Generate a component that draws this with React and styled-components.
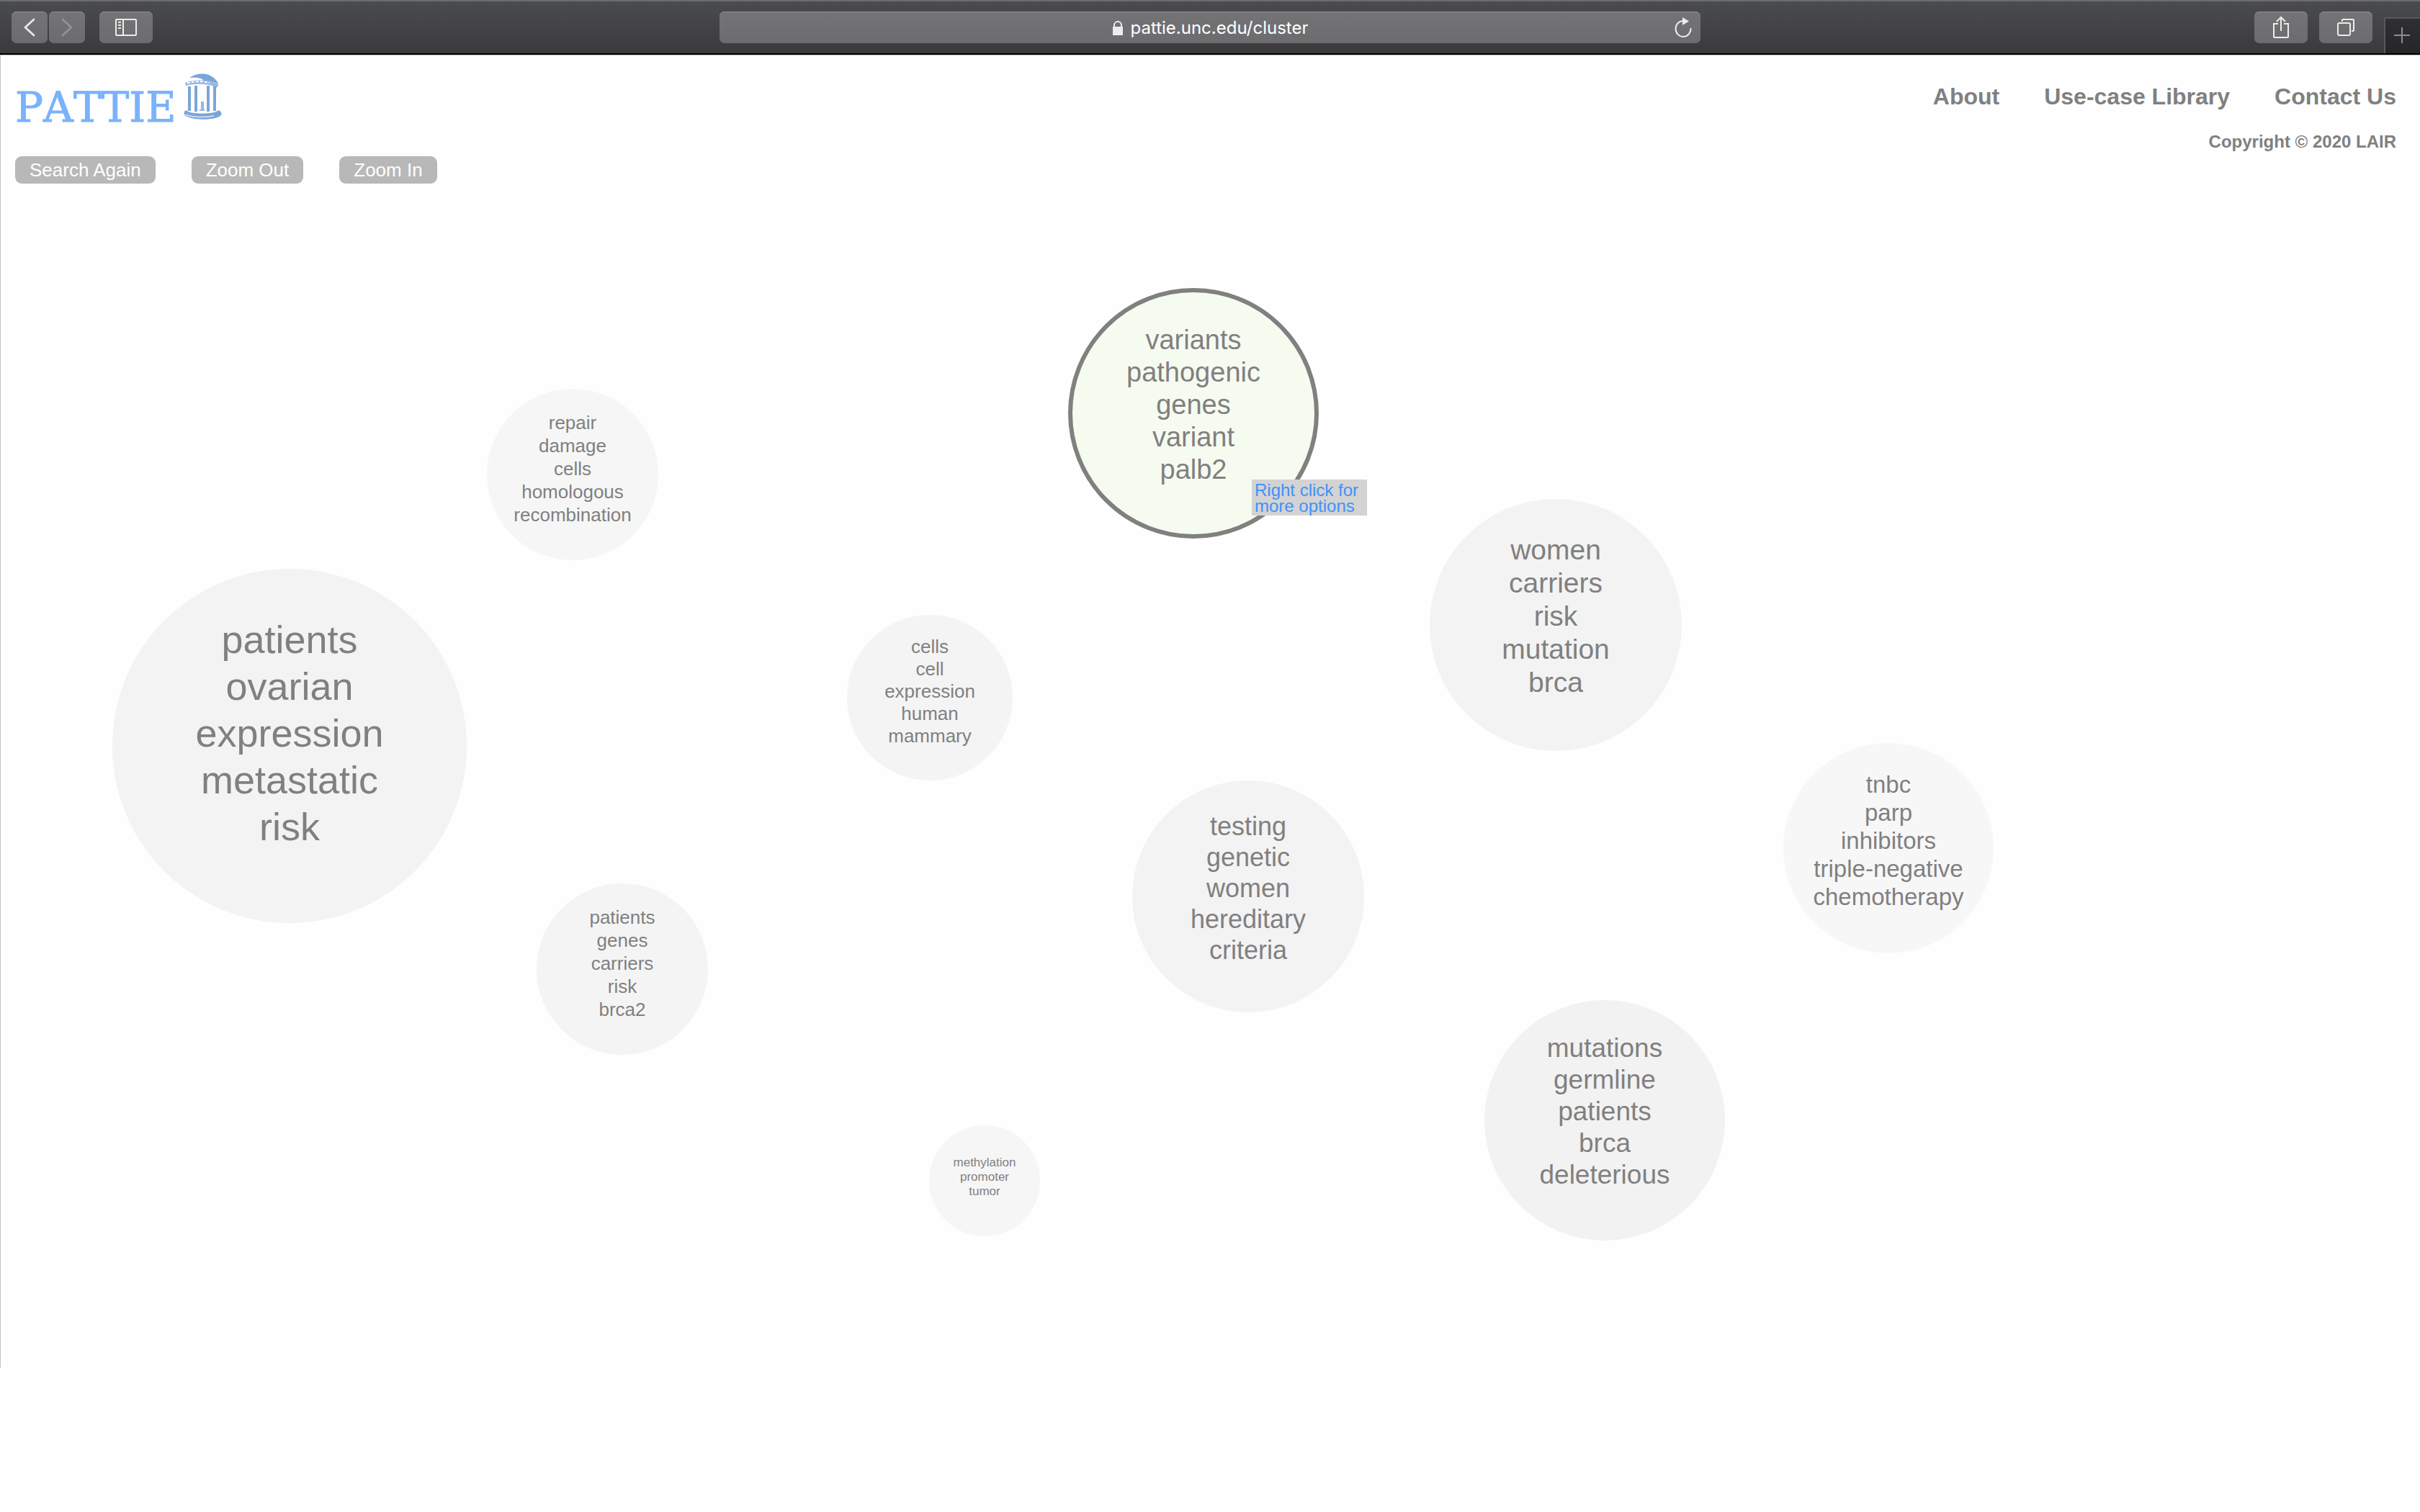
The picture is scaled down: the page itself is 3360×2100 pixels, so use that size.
import React from "react";
import styled, { createGlobalStyle } from "styled-components";

const sans = `"Liberation Sans", Arial, Helvetica, sans-serif`;

const GlobalStyle = createGlobalStyle`
  *, *::before, *::after { box-sizing: border-box; }
  body { margin: 0; background: #fefefe; color: #808080; font-family: ${sans}; }
  button, input { font: inherit; color: inherit; margin: 0; padding: 0; border: 0; background: none; }
  svg { display: block; flex: none; }
`;

/* ---------- browser bar ---------- */

const BrowserBar = styled.div`
  display: grid;
  grid-template-columns: 1fr minmax(0, 1362px) 1fr;
  height: 77px;
  padding-top: 16px;
  background: linear-gradient(#4b4c4e, #3a3a3c);
  border-bottom: 1px solid #c4c4c4;
  box-shadow: inset 0 2px #6a6c6e, inset 0 -2px #000;
`;

const BarGroup = styled.div`
  display: flex;
  align-items: flex-start;
  justify-content: ${(p) => (p.$end ? "flex-end" : "flex-start")};
  gap: ${(p) => (p.$end ? 16 : 20)}px;
  padding-left: 16px;
`;

const ButtonPair = styled.div`
  display: flex;
  gap: 2px;
`;

const BarButton = styled.button`
  display: flex;
  align-items: center;
  justify-content: center;
  width: ${(p) => (p.$narrow ? 50 : 74)}px;
  height: 44px;
  border-radius: 7px;
  background: linear-gradient(#747476, #6c6c6e);
  box-shadow: inset 0 1px #8e8e90;
`;

const NewTabButton = styled.button`
  display: flex;
  align-items: center;
  justify-content: center;
  align-self: flex-end;
  width: 50px;
  height: 50px;
  margin-bottom: 2px;
  background: linear-gradient(#303032, #262628);
  box-shadow: inset 2px 2px #58585a;
`;

const AddressField = styled.div`
  display: flex;
  align-items: center;
  height: 44px;
  border-radius: 7px;
  background: linear-gradient(#747476, #6c6c6e);
  box-shadow: inset 0 1px #8e8e90;
`;

const AddressLabel = styled.label`
  display: flex;
  flex: 1;
  align-items: center;
  justify-content: center;
  gap: 10px;
  padding-top: 2px;
  padding-left: 36px;
`;

const AddressInput = styled.input`
  field-sizing: content;
  font-family: Inter, Roboto, sans-serif;
  font-size: 24px;
  line-height: 32px;
  color: #fff;
`;

const ReloadButton = styled.button`
  margin-right: 12px;
`;

/* ---------- page ---------- */

const Page = styled.main`
  border-left: 1px solid #c4c4c4;
`;

const Header = styled.header`
  padding: 25px 33px 25px 20px;
`;

const HeaderTop = styled.div`
  display: flex;
  justify-content: space-between;
  align-items: flex-start;
`;

const Logo = styled.a`
  display: flex;
  align-items: flex-start;
  color: #7ab2fb;
  text-decoration: none;
`;

const LogoText = styled.span`
  min-width: 234px;
  font-family: "DejaVu Serif", "Courier New", serif;
  font-kerning: none;
  font-size: 58px;
  line-height: 94px;
  -webkit-text-stroke: 1px #7ab2fb;
`;

const SiteLinks = styled.div`
  display: flex;
  flex-direction: column;
  align-items: flex-end;
  gap: 31px;
  padding-top: 14px;
  font-weight: bold;
`;

const Nav = styled.nav`
  display: flex;
  gap: 62px;
`;

const NavLink = styled.a`
  font-size: 32px;
  line-height: 36px;
  color: #808080;
  text-decoration: none;
`;

const Copyright = styled.p`
  margin: 0;
  font-size: 24px;
  line-height: 28px;
`;

const Controls = styled.div`
  display: flex;
  gap: 50px;
  margin-top: 6px;
`;

const ControlButton = styled.button`
  height: 38px;
  padding: 0 20px;
  border-radius: 9px;
  background: #b8b8b8;
  color: #fff;
  font-size: 26px;
  line-height: 38px;
`;

/* The map is a free canvas: every cluster carries its own centre and diameter. */
const ClusterMap = styled.section`
  position: relative;
  height: 1620px;
`;

const Bubble = styled.button`
  position: absolute;
  left: ${(p) => p.$x - p.$d / 2}px;
  top: ${(p) => p.$y - p.$d / 2}px;
  display: flex;
  flex-direction: column;
  align-items: center;
  justify-content: center;
  width: ${(p) => p.$d}px;
  height: ${(p) => p.$d}px;
  padding-bottom: ${(p) => Math.round(p.$size * 0.64)}px;
  border-radius: 50%;
  border: ${(p) => (p.$active ? "6px solid #808080" : "0")};
  background: ${(p) => p.$fill};
  color: #808080;
  font-size: ${(p) => p.$size}px;
  line-height: ${(p) => p.$line}px;
  white-space: nowrap;
`;

const Tooltip = styled.div`
  position: absolute;
  left: 1737px;
  top: 386px;
  width: 160px;
  padding: 4px 4px 2px;
  background: #d3d3d3;
  color: #4092fb;
  font-size: 24px;
  line-height: 22px;
`;

const clusters = [
  { x: 1656, y: 294, d: 348, size: 38, line: 45, fill: "#f6fbf0", active: true, terms: ["variants", "pathogenic", "genes", "variant", "palb2"] },
  { x: 794, y: 379, d: 238, size: 26, line: 32, fill: "#f6f6f6", terms: ["repair", "damage", "cells", "homologous", "recombination"] },
  { x: 401, y: 756, d: 492, size: 54, line: 65, fill: "#f3f3f3", terms: ["patients", "ovarian", "expression", "metastatic", "risk"] },
  { x: 1290, y: 689, d: 230, size: 26, line: 31, fill: "#f4f4f4", terms: ["cells", "cell", "expression", "human", "mammary"] },
  { x: 2159, y: 588, d: 350, size: 39, line: 46, fill: "#f3f3f3", terms: ["women", "carriers", "risk", "mutation", "brca"] },
  { x: 2621, y: 898, d: 292, size: 33, line: 39, fill: "#f7f7f7", terms: ["tnbc", "parp", "inhibitors", "triple-negative", "chemotherapy"] },
  { x: 1732, y: 965, d: 322, size: 36, line: 43, fill: "#f3f3f3", terms: ["testing", "genetic", "women", "hereditary", "criteria"] },
  { x: 863, y: 1066, d: 238, size: 26, line: 32, fill: "#f4f4f4", terms: ["patients", "genes", "carriers", "risk", "brca2"] },
  { x: 2227, y: 1276, d: 334, size: 37, line: 44, fill: "#f2f2f2", terms: ["mutations", "germline", "patients", "brca", "deleterious"] },
  { x: 1366, y: 1360, d: 154, size: 17, line: 20, fill: "#f6f6f6", terms: ["methylation", "promoter", "tumor"] },
];

/* ---------- drawings ---------- */

const Chevron = ({ forward }) => (
  <svg width="16" height="26" viewBox="0 0 16 26" fill="none" stroke={forward ? "#949496" : "#ececec"} strokeWidth="2.6" strokeLinecap="round" strokeLinejoin="round">
    <path d={forward ? "M2 2 14 13 2 24" : "M14 2 2 13 14 24"} />
  </svg>
);

const SidebarIcon = () => (
  <svg width="30" height="24" viewBox="0 0 30 24" fill="none" stroke="#ececec" strokeWidth="2">
    <rect x="1" y="1" width="28" height="22" rx="1" />
    <path d="M11 1V23M4 5H8M4 9H8M4 13H8" />
  </svg>
);

const LockIcon = () => (
  <svg width="16" height="20" viewBox="0 0 16 20">
    <rect x="1" y="8" width="14" height="12" fill="#ececec" />
    <path d="M3 9V6a5 5 0 0 1 10 0v3" fill="none" stroke="#ececec" strokeWidth="2" />
  </svg>
);

const ReloadIcon = () => (
  <svg width="24" height="28" viewBox="0 0 24 28">
    <path d="M22.500 15A10.500 11 0 1 1 12 5" fill="none" stroke="#ececec" strokeWidth="2" />
    <path d="M11 0 20 5.500 11 11Z" fill="#ececec" />
  </svg>
);

const ShareIcon = () => (
  <svg width="24" height="32" viewBox="0 0 24 32" fill="none" stroke="#ececec" strokeWidth="2">
    <path d="M8 11H2V29q0 1 1 1H21q1 0 1-1V11H16M12 21V2M6 8l6-6 6 6" />
  </svg>
);

const TabsIcon = () => (
  <svg width="26" height="26" viewBox="0 0 26 26" fill="none" stroke="#ececec" strokeWidth="2">
    <rect x="2" y="7" width="17" height="17" rx="2" />
    <path d="M8 5V3q0-1 1-1H23q1 0 1 1V17q0 1-1 1H21" />
  </svg>
);

const PlusIcon = () => (
  <svg width="22" height="22" viewBox="0 0 22 22" stroke="#8e8e90" strokeWidth="2">
    <path d="M11 0V22M0 11H22" />
  </svg>
);

const WellIcon = () => (
  <svg width="53" height="64" viewBox="0 0 53 64" fill="#7ba5da">
    <path d="M8 6C15 1 22 0 28 0.500C38 1.500 45 7 48.500 15C42 12 36 10.500 28 10C26 6.500 19 5 8 6Z" />
    <path d="M2 13C12 8 36 8 48 15.500V17.500C45 19 46 21 44 22L42 18C32 14 14 14 3 17Z" opacity="0.8" />
    <path d="M5 13.500C15 10.500 26 10.500 36 13" stroke="#fff" strokeWidth="2" strokeDasharray="4 2" fill="none" />
    <path d="M6 18H10V52H6ZM15 17H19V53H15ZM32 17H36V53H32ZM41 18H45V52H41Z" />
    <path d="M24 39H28V49H29V52H22V50H24Z" opacity="0.8" />
    <path d="M0.500 55C0.500 52 3 51 5 51.500C5 57 46 57 47 51.500C50 51 52.500 53 52.500 56C52 66.500 1 66.500 0.500 55Z" />
    <path d="M3 57C12 61.500 32 61.500 42 58.500" stroke="#dce8f6" strokeWidth="1.500" fill="none" />
  </svg>
);

export default function App() {
  return (
    <>
      <GlobalStyle />
      <BrowserBar>
        <BarGroup>
          <ButtonPair>
            <BarButton $narrow aria-label="Back"><Chevron /></BarButton>
            <BarButton $narrow aria-label="Forward"><Chevron forward /></BarButton>
          </ButtonPair>
          <BarButton aria-label="Sidebar"><SidebarIcon /></BarButton>
        </BarGroup>
        <AddressField>
          <AddressLabel>
            <LockIcon />
            <AddressInput aria-label="Address" defaultValue="pattie.unc.edu/cluster" />
          </AddressLabel>
          <ReloadButton aria-label="Reload"><ReloadIcon /></ReloadButton>
        </AddressField>
        <BarGroup $end>
          <BarButton aria-label="Share"><ShareIcon /></BarButton>
          <BarButton aria-label="Tabs"><TabsIcon /></BarButton>
          <NewTabButton aria-label="New tab"><PlusIcon /></NewTabButton>
        </BarGroup>
      </BrowserBar>

      <Page>
        <Header>
          <HeaderTop>
            <Logo href="#home">
              <LogoText>PATTIE</LogoText>
              <WellIcon />
            </Logo>
            <SiteLinks>
              <Nav>
                <NavLink href="#about">About</NavLink>
                <NavLink href="#library">Use-case Library</NavLink>
                <NavLink href="#contact">Contact Us</NavLink>
              </Nav>
              <Copyright>Copyright © 2020 LAIR</Copyright>
            </SiteLinks>
          </HeaderTop>
          <Controls>
            <ControlButton>Search Again</ControlButton>
            <ControlButton>Zoom Out</ControlButton>
            <ControlButton>Zoom In</ControlButton>
          </Controls>
        </Header>

        <ClusterMap aria-label="Clusters">
          {clusters.map((c) => (
            <Bubble key={c.terms.join()} $x={c.x} $y={c.y} $d={c.d} $size={c.size} $line={c.line} $fill={c.fill} $active={c.active}>
              {c.terms.map((term) => (
                <span key={term}>{term}</span>
              ))}
            </Bubble>
          ))}
          <Tooltip role="tooltip">Right click for more options</Tooltip>
        </ClusterMap>
      </Page>
    </>
  );
}
